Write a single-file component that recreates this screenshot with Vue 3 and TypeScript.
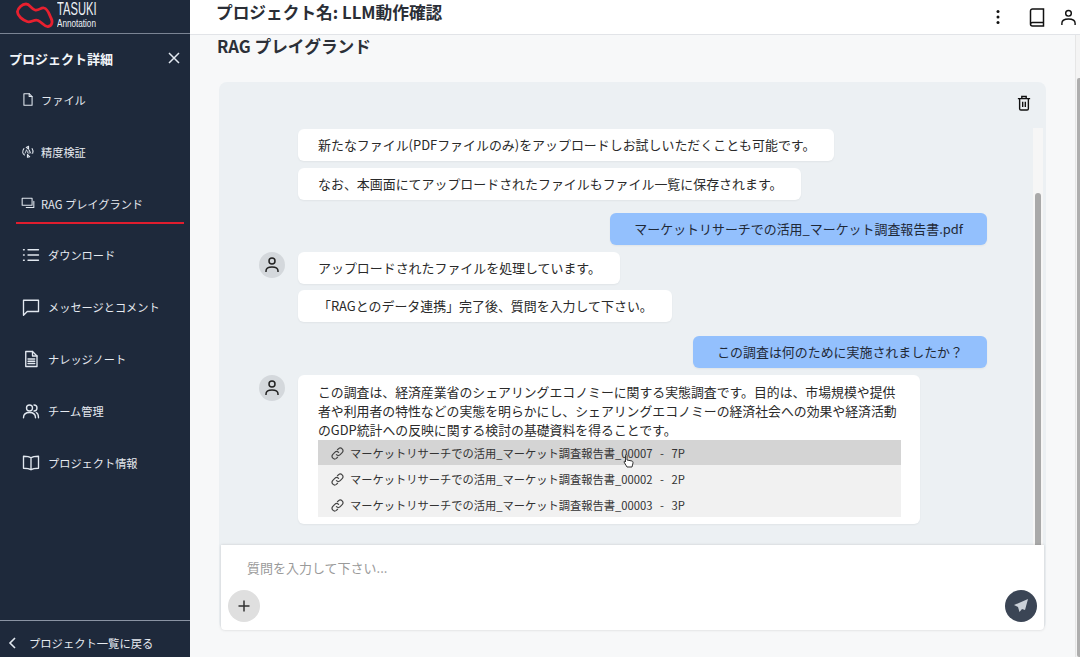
<script setup lang="ts">
interface NavItem { label: string; icon: string; active?: boolean }
const nav: NavItem[] = [
  { label: 'ファイル', icon: 'file' },
  { label: '精度検証', icon: 'check' },
  { label: 'RAG プレイグランド', icon: 'chat', active: true },
  { label: 'ダウンロード', icon: 'list' },
  { label: 'メッセージとコメント', icon: 'msg' },
  { label: 'ナレッジノート', icon: 'note' },
  { label: 'チーム管理', icon: 'team' },
  { label: 'プロジェクト情報', icon: 'book' },
]
const sources = [
  { label: 'マーケットリサーチでの活用_マーケット調査報告書_00007 - 7P', hover: true },
  { label: 'マーケットリサーチでの活用_マーケット調査報告書_00002 - 2P', hover: false },
  { label: 'マーケットリサーチでの活用_マーケット調査報告書_00003 - 3P', hover: false },
]
</script>

<template>
  <div class="page">
    <aside class="side">
      <div class="brand">
        <svg class="logo" width="38" height="26" viewBox="0 0 38 26" fill="none" stroke="#e8202f" stroke-width="2.800" stroke-linejoin="round">
          <path d="M1.500 9.500 C2 6 6 2 10 2 C14 2 15 7 19 8 C23 9 25 5 28 6 C32 7 33 12 35 16 C37 20 36 24 32 24.500 C28 25 26 20 22 18.500 C18 17 15 21 11 19.500 C7 18 1 14 1.500 9.500 Z" />
        </svg>
        <div class="brand-text">
          <div class="brand-top">TASUKI</div>
          <div class="brand-sub">Annotation</div>
        </div>
      </div>
      <div class="side-head">
        <span>プロジェクト詳細</span>
        <svg width="14" height="14" viewBox="0 0 14 14" stroke="#e2e8f0" stroke-width="1.5"><path d="M2 2 12 12M12 2 2 12" /></svg>
      </div>
      <nav class="nav">
        <div v-for="(n, i) in nav" :key="n.label" class="nav-item" :class="{ wide: i > 2, active: n.active }">
          <svg class="nav-icon" :class="{ big: i > 2 }" viewBox="0 0 24 24" fill="none" stroke="#e2e8f0" stroke-width="1.8" stroke-linecap="round" stroke-linejoin="round">
            <template v-if="n.icon === 'file'"><path d="M5 2h9l5 5v15H5z" /><path d="M14 2v5h5" /></template>
            <template v-else-if="n.icon === 'check'">
              <path d="M5 7a9 9 0 0 0-2 7c.5 2 2 3.500 3 4M19 7c1.500 2 2 5 1 8" /><path d="M9 5l4-2v5zM15 21l-4 1v-5z" /><path d="M7 15l2.500-6 2.500 6M14 15v-6l3 6" stroke-width="1.400" />
            </template>
            <template v-else-if="n.icon === 'chat'"><path d="M2 3h17v12H2zM22 8v11H9" /></template>
            <template v-else-if="n.icon === 'list'"><path d="M8 5h14M8 12h14M8 19h14M2 5h1M2 12h1M2 19h1" /></template>
            <template v-else-if="n.icon === 'msg'"><path d="M2 3h20v15H7l-5 5z" /></template>
            <template v-else-if="n.icon === 'note'"><path d="M5 2h9l6 6v14H5z" /><path d="M14 2v6h6M8 12h9M8 15h9M8 18h9" /></template>
            <template v-else-if="n.icon === 'team'"><circle cx="10" cy="8" r="4" /><path d="M2 21c0-5 4-7 8-7s8 2 8 7M16 4a4 4 0 0 1 0 8M19 14c2 1 3 4 3 7" /></template>
            <template v-else><path d="M12 5C9 3 5 3 2 3v16c3 0 7 0 10 2 3-2 7-2 10-2V3c-3 0-7 0-10 2zM12 5v16" /></template>
          </svg>
          <span>{{ n.label }}</span>
        </div>
      </nav>
      <div class="back">
        <svg width="10" height="14" viewBox="0 0 10 14" fill="none" stroke="#e2e8f0" stroke-width="1.6"><path d="M8 2 3 7l5 5" /></svg>
        <span>プロジェクト一覧に戻る</span>
      </div>
    </aside>

    <div class="main">
      <header class="top">
        <h1>プロジェクト名: LLM動作確認</h1>
        <div class="top-icons">
          <svg width="16" height="16" viewBox="0 0 16 16" fill="#111"><circle cx="8" cy="2.500" r="1.500" /><circle cx="8" cy="8" r="1.500" /><circle cx="8" cy="13.500" r="1.500" /></svg>
          <svg class="book" width="16" height="19" viewBox="0 0 16 19" fill="none" stroke="#111" stroke-width="1.500"><path d="M3.500 1h11v13.500h-11a2 2 0 0 0-2 2V3a2 2 0 0 1 2-2zM1.500 16a2 2 0 0 0 2 2h11v-3.500" /></svg>
          <svg width="17" height="17" viewBox="0 0 18 18" fill="none" stroke="#111" stroke-width="1.500"><circle cx="9" cy="4.500" r="3" /><path d="M2 17v-2c0-3 3-4.500 7-4.500s7 1.500 7 4.500v2" /></svg>
        </div>
      </header>
      <div class="body">
        <div class="content">
          <h2>RAG プレイグランド</h2>
          <section class="panel">
            <div class="panel-top">
              <svg width="14" height="16" viewBox="0 0 16 18" fill="none" stroke="#111" stroke-width="1.600"><path d="M1 4h14M5.500 4V1.500h5V4M3 4v11.500a1.500 1.500 0 0 0 1.500 1.500h7a1.500 1.500 0 0 0 1.500-1.500V4M6.500 7.500v6M9.500 7.500v6" /></svg>
            </div>
            <div class="scroll">
              <div class="msgs">
                <div class="row"><div class="bubble">新たなファイル(PDFファイルのみ)をアップロードしお試しいただくことも可能です。</div></div>
                <div class="row"><div class="bubble">なお、本画面にてアップロードされたファイルもファイル一覧に保存されます。</div></div>
                <div class="row user gap-l"><div class="bubble blue">マーケットリサーチでの活用_マーケット調査報告書.pdf</div></div>
                <div class="row"><div class="avatar"><svg width="18" height="18" viewBox="0 0 18 18" fill="none" stroke="#222" stroke-width="1.500"><circle cx="9" cy="5" r="3" /><path d="M3 16v-1c0-3 3-4 6-4s6 1 6 4v1" /></svg></div><div class="bubble">アップロードされたファイルを処理しています。</div></div>
                <div class="row"><div class="bubble">「RAGとのデータ連携」完了後、質問を入力して下さい。</div></div>
                <div class="row user gap-l"><div class="bubble blue">この調査は何のために実施されましたか？</div></div>
                <div class="row"><div class="avatar"><svg width="18" height="18" viewBox="0 0 18 18" fill="none" stroke="#222" stroke-width="1.500"><circle cx="9" cy="5" r="3" /><path d="M3 16v-1c0-3 3-4 6-4s6 1 6 4v1" /></svg></div>
                  <div class="bubble answer">
                    <p>この調査は、経済産業省のシェアリングエコノミーに関する実態調査です。目的は、市場規模や提供者や利用者の特性などの実態を明らかにし、シェアリングエコノミーの経済社会への効果や経済活動のGDP統計への反映に関する検討の基礎資料を得ることです。</p>
                    <div class="sources">
                      <div v-for="s in sources" :key="s.label" class="src" :class="{ hover: s.hover }">
                        <svg width="13" height="13" viewBox="0 0 24 24" fill="none" stroke="#444" stroke-width="2.200" stroke-linecap="round"><path d="M10 14a5 5 0 0 0 7 0l4-4a5 5 0 0 0-7-7l-2 2" /><path d="M14 10a5 5 0 0 0-7 0l-4 4a5 5 0 0 0 7 7l2-2" /></svg>
                        <span>{{ s.label }}</span>
                      </div>
                      <svg class="cursor" width="13" height="15" viewBox="0 0 13 15"><path d="M4 1.500c1 0 1 .5 1 1V7l5 1c1 .5 1 1 1 2l-1 4H5L2 9c0-1 1-1 1.500 0V2.500c0-.5 0-1 .5-1z" fill="#fff" stroke="#333" stroke-width="1" /></svg>
                    </div>
                  </div>
                </div>
              </div>
              <div class="bar"><div class="thumb"></div></div>
            </div>
            <div class="input">
              <div class="ph">質問を入力して下さい...</div>
              <div class="input-btns">
                <div class="btn plus"><svg width="14" height="14" viewBox="0 0 14 14" stroke="#333" stroke-width="1.500"><path d="M7 1.500v11M1.500 7h11" /></svg></div>
                <div class="btn send"><svg width="16" height="16" viewBox="0 0 16 16" fill="#cbd0d8"><path d="M15 1 1 7l4 2 1.500 5L9 11l3 1z" /></svg></div>
              </div>
            </div>
          </section>
        </div>
        <div class="pagebar"><div class="pagethumb"></div></div>
      </div>
    </div>
  </div>
</template>

<style>
html, body { margin: 0; background: #f8f9fa; }
</style>

<style scoped>
.page { width: 1080px; height: 657px; display: flex; overflow: hidden; font-family: "Noto Sans CJK JP", "Inter", sans-serif; color: #222; background: #f7f8f9; }
.side { width: 190px; flex: none; background: #1e293b; color: #e6eaf0; display: flex; flex-direction: column; box-sizing: border-box; }
.brand { height: 34px; flex: none; box-sizing: border-box; border-bottom: 1px solid #7b8494; display: flex; align-items: flex-start; padding: 2px 0 0 16px; gap: 3px; }
.logo { flex: none; }
.brand-text { font-family: "Liberation Sans", sans-serif; color: #eef1f5; margin-top: -1px; }
.brand-top { font-size: 18px; line-height: 17px; height: 17px; transform: scaleX(.62); transform-origin: left; }
.brand-sub { font-size: 11px; line-height: 11px; height: 11px; transform: scaleX(.74); transform-origin: left; }
.side-head { display: flex; justify-content: space-between; align-items: center; padding: 14px 9px 0 9px; height: 20px; font-size: 13px; font-weight: 700; color: #f1f5f9; }
.nav { display: flex; flex-direction: column; margin-top: 4px; flex: 1; }
.nav-item { height: 52px; flex: none; box-sizing: border-box; display: flex; align-items: center; gap: 6px; padding: 3px 0 0 21px; font-size: 11.200px; color: #e6eaf0; position: relative; }
.nav-item.wide { gap: 8px; padding: 2px 0 0 22px; }
.nav-item.active::after { content: ""; position: absolute; left: 16px; right: 6px; bottom: 4px; height: 2.500px; background: #e11d2e; }
.nav-icon { width: 14px; height: 15px; flex: none; }
.nav-icon.big { width: 18px; height: 18px; }
.back { flex: none; height: 37px; border-top: 1px solid #8a93a3; display: flex; align-items: center; gap: 12px; padding: 8px 0 0 7px; font-size: 11.300px; box-sizing: border-box; }
.main { flex: 1; min-width: 0; display: flex; flex-direction: column; }
.top { height: 35px; flex: none; box-sizing: border-box; background: #fff; border-bottom: 1px solid #e2e4e8; display: flex; align-items: center; justify-content: space-between; padding: 0 3px 11px 26px; }
h1 { margin: 0; font-size: 16.700px; font-weight: 700; color: #2a2e36; }
.top-icons { display: flex; align-items: center; gap: 17px; margin-top: 11px; }
.book { margin: 0 -2px 0 6px; }
.body { flex: 1; min-height: 0; display: flex; }
.content { flex: 1; padding: 0 0 0 27px; min-width: 0; display: flex; flex-direction: column; }
.pagebar { width: 5px; flex: none; background: #f4f4f4; border-left: 1px solid #e6e6e6; box-sizing: border-box; }
.pagethumb { margin: 43px 0 0 1px; height: 579px; background: #aeaeae; border-radius: 2px 0 0 2px; }
h2 { margin: 1px 0 0 0; height: 20px; line-height: 20px; font-size: 16.700px; font-weight: 700; color: #2c3038; }
.panel { margin: 26px 0 0 2px; width: 827px; height: 548px; background: #ecf0f3; border-radius: 8px; display: flex; flex-direction: column; position: relative; }
.panel-top { height: 46px; flex: none; display: flex; justify-content: flex-end; align-items: flex-start; padding: 13px 15px 0 0; box-sizing: border-box; }
.scroll { flex: 1; min-height: 0; display: flex; overflow: hidden; }
.msgs { width: 814px; flex: none; display: flex; flex-direction: column; padding: 1px 0 0 40px; box-sizing: border-box; }
.bar { width: 10px; flex: none; background: #f6f6f6; }
.thumb { margin: 65px 2px 0; height: 352px; background: #a9a9a9; border-radius: 3px 3px 0 0; }
.row { display: flex; align-items: flex-start; margin-bottom: 6.600px; padding-left: 39px; position: relative; }
.row.user { justify-content: flex-end; padding: 0 46px 0 0; }
.row.gap-l { margin-top: 7px; }
.bubble { background: #fff; border-radius: 6px; padding: 0 19px 0 20px; min-height: 32px; line-height: 32px; font-size: 12.950px; color: #2a2a2a; box-shadow: 0 1px 2px rgba(0,0,0,.05); white-space: nowrap; }
.blue { background: #93c0fd; padding: 0 24px; color: #1f2937; }
.avatar { position: absolute; left: 0; top: 0; width: 26px; height: 26px; border-radius: 50%; background: #d4d8dc; display: flex; align-items: center; justify-content: center; }
.answer { width: 622px; box-sizing: border-box; padding: 7px 19px 7px 20px; line-height: 19px; font-size: 12.870px; white-space: normal; }
.answer p { margin: 0; }
.sources { margin-top: 1px; position: relative; }
.src { height: 25.700px; box-sizing: border-box; background: #f1f1f1; display: flex; align-items: center; gap: 6px; padding: 3px 0 0 13px; font-size: 11.250px; word-spacing: 5px; color: #333; }
.src.hover { background: #d4d4d4; }
.cursor { position: absolute; left: 304px; top: 13px; }
.input { flex: none; margin: 0 2px; height: 85px; background: #fff; border-radius: 0 0 4px 4px; box-shadow: 0 0 3px rgba(0,0,0,.16); box-sizing: border-box; padding: 13px 7px 8px 7px; display: flex; flex-direction: column; justify-content: space-between; }
.ph { font-size: 13px; color: #9a9a9a; padding-left: 19px; line-height: 20px; }
.input-btns { display: flex; justify-content: space-between; }
.btn { width: 32px; height: 32px; border-radius: 50%; display: flex; align-items: center; justify-content: center; }
.plus { background: #dfdfdf; }
.send { background: #3b4555; }
</style>
